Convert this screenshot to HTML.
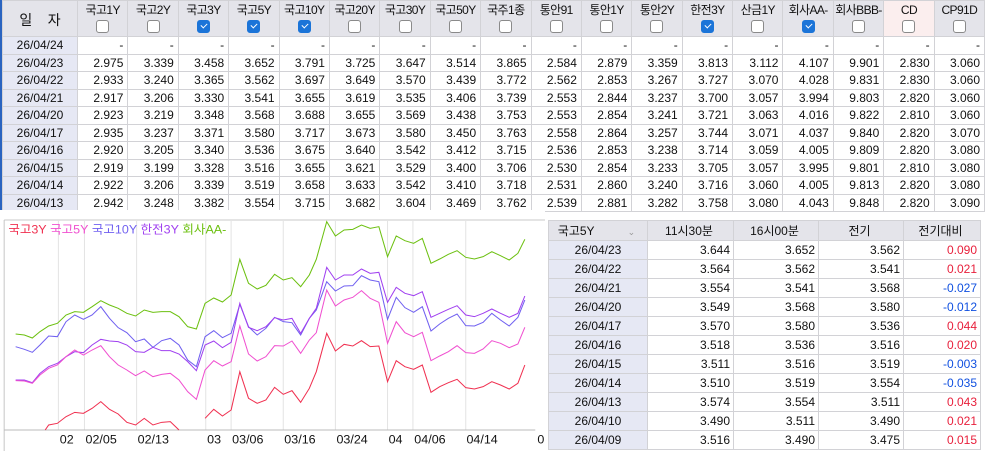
<!DOCTYPE html>
<html><head><meta charset="utf-8"><style>
*{margin:0;padding:0;box-sizing:border-box}
body{width:985px;height:451px;overflow:hidden;background:#fff;font-family:"Liberation Sans","Noto Sans CJK KR",sans-serif;font-size:12px;color:#111;position:relative}
#lb{position:absolute;left:0;top:0;width:2px;height:451px;background:#2a64c0}
table{border-collapse:collapse;table-layout:fixed;position:absolute}
#t1{left:2px;top:0;width:983px}
#t1 td,#t1 th{border:1px solid #d2d2d6;height:17.5px;padding:0 4px 0 0;text-align:right;white-space:nowrap;overflow:hidden;font-weight:normal}
#t1 th{background:#e4e4ea;height:36px;text-align:center;vertical-align:top;padding:2px 0 0;line-height:14px;letter-spacing:-0.6px}
#t1 td.d{background:#e6e8f4;text-align:center;padding:0}
#t1 th.cd{background:#fbeeee}
.cb{display:inline-block;width:13px;height:13px;border:1px solid #8a8a8a;border-radius:3px;background:#fff;margin-top:3px;position:relative}
.cb.on{background:#1b74d8;border-color:#1b74d8}
.cb.on:after{content:"";position:absolute;left:3px;top:2px;width:5px;height:3px;border-left:1.5px solid #fff;border-bottom:1.5px solid #fff;transform:rotate(-45deg)}
#t2{left:548px;top:220px;width:432px}
#t2 td,#t2 th{border:1px solid #d2d2d6;height:19px;text-align:right;padding:0 3px 0 0;font-weight:normal}
#t2 th{background:#e4e4ea;text-align:center;height:20px}
#t2 td.d{background:#e6e8f4;text-align:center;padding:0}
.r{color:#e8203c}.b{color:#1050e0}
#ch{position:absolute;left:0;top:210px}
</style></head><body>
<div id="lb"></div>
<table id="t1">
<colgroup><col style="width:75px"><col span="18" style="width:50.4px"></colgroup>
<tr><th style="vertical-align:middle;font-size:14px;letter-spacing:0">일&nbsp;&nbsp;&nbsp;&nbsp;자</th>
<th>국고1Y<br><span class="cb"></span></th><th>국고2Y<br><span class="cb"></span></th><th>국고3Y<br><span class="cb on"></span></th><th>국고5Y<br><span class="cb on"></span></th><th>국고10Y<br><span class="cb on"></span></th><th>국고20Y<br><span class="cb"></span></th><th>국고30Y<br><span class="cb"></span></th><th>국고50Y<br><span class="cb"></span></th><th>국주1종<br><span class="cb"></span></th><th>통안91<br><span class="cb"></span></th><th>통안1Y<br><span class="cb"></span></th><th>통안2Y<br><span class="cb"></span></th><th>한전3Y<br><span class="cb on"></span></th><th>산금1Y<br><span class="cb"></span></th><th>회사AA-<br><span class="cb on"></span></th><th>회사BBB-<br><span class="cb"></span></th><th class="cd">CD<br><span class="cb"></span></th><th>CP91D<br><span class="cb"></span></th></tr>
<tr><td class="d">26/04/24</td><td>-</td><td>-</td><td>-</td><td>-</td><td>-</td><td>-</td><td>-</td><td>-</td><td>-</td><td>-</td><td>-</td><td>-</td><td>-</td><td>-</td><td>-</td><td>-</td><td>-</td><td>-</td></tr>
<tr><td class="d">26/04/23</td><td>2.975</td><td>3.339</td><td>3.458</td><td>3.652</td><td>3.791</td><td>3.725</td><td>3.647</td><td>3.514</td><td>3.865</td><td>2.584</td><td>2.879</td><td>3.359</td><td>3.813</td><td>3.112</td><td>4.107</td><td>9.901</td><td>2.830</td><td>3.060</td></tr>
<tr><td class="d">26/04/22</td><td>2.933</td><td>3.240</td><td>3.365</td><td>3.562</td><td>3.697</td><td>3.649</td><td>3.570</td><td>3.439</td><td>3.772</td><td>2.562</td><td>2.853</td><td>3.267</td><td>3.727</td><td>3.070</td><td>4.028</td><td>9.831</td><td>2.830</td><td>3.060</td></tr>
<tr><td class="d">26/04/21</td><td>2.917</td><td>3.206</td><td>3.330</td><td>3.541</td><td>3.655</td><td>3.619</td><td>3.535</td><td>3.406</td><td>3.739</td><td>2.553</td><td>2.844</td><td>3.237</td><td>3.700</td><td>3.057</td><td>3.994</td><td>9.803</td><td>2.820</td><td>3.060</td></tr>
<tr><td class="d">26/04/20</td><td>2.923</td><td>3.219</td><td>3.348</td><td>3.568</td><td>3.688</td><td>3.655</td><td>3.569</td><td>3.438</td><td>3.753</td><td>2.553</td><td>2.854</td><td>3.241</td><td>3.721</td><td>3.063</td><td>4.016</td><td>9.822</td><td>2.810</td><td>3.060</td></tr>
<tr><td class="d">26/04/17</td><td>2.935</td><td>3.237</td><td>3.371</td><td>3.580</td><td>3.717</td><td>3.673</td><td>3.580</td><td>3.450</td><td>3.763</td><td>2.558</td><td>2.864</td><td>3.257</td><td>3.744</td><td>3.071</td><td>4.037</td><td>9.840</td><td>2.820</td><td>3.070</td></tr>
<tr><td class="d">26/04/16</td><td>2.920</td><td>3.205</td><td>3.340</td><td>3.536</td><td>3.675</td><td>3.640</td><td>3.542</td><td>3.412</td><td>3.715</td><td>2.536</td><td>2.853</td><td>3.238</td><td>3.714</td><td>3.059</td><td>4.005</td><td>9.809</td><td>2.820</td><td>3.080</td></tr>
<tr><td class="d">26/04/15</td><td>2.919</td><td>3.199</td><td>3.328</td><td>3.516</td><td>3.655</td><td>3.621</td><td>3.529</td><td>3.400</td><td>3.706</td><td>2.530</td><td>2.854</td><td>3.233</td><td>3.705</td><td>3.057</td><td>3.995</td><td>9.801</td><td>2.810</td><td>3.080</td></tr>
<tr><td class="d">26/04/14</td><td>2.922</td><td>3.206</td><td>3.339</td><td>3.519</td><td>3.658</td><td>3.633</td><td>3.542</td><td>3.410</td><td>3.718</td><td>2.531</td><td>2.860</td><td>3.240</td><td>3.716</td><td>3.060</td><td>4.005</td><td>9.813</td><td>2.820</td><td>3.080</td></tr>
<tr><td class="d">26/04/13</td><td>2.942</td><td>3.248</td><td>3.382</td><td>3.554</td><td>3.715</td><td>3.682</td><td>3.604</td><td>3.469</td><td>3.762</td><td>2.539</td><td>2.881</td><td>3.282</td><td>3.758</td><td>3.080</td><td>4.043</td><td>9.848</td><td>2.820</td><td>3.090</td></tr>
</table>

<svg id="ch" width="545" height="241" viewBox="0 0 1568 723" preserveAspectRatio="none">
<rect x="0" y="0" width="1635" height="723" fill="#fff"/>
<line x1="12" y1="30" x2="1635" y2="30" stroke="#c8c8c8" stroke-width="3"/>
<line x1="12" y1="30" x2="12" y2="723" stroke="#c8c8c8" stroke-width="3"/>
<g stroke="#e4e4e4" stroke-width="3"><line x1="168" y1="30" x2="168" y2="660"/><line x1="243" y1="30" x2="243" y2="660"/><line x1="393" y1="30" x2="393" y2="660"/><line x1="592" y1="30" x2="592" y2="660"/><line x1="665" y1="30" x2="665" y2="660"/><line x1="815" y1="30" x2="815" y2="660"/><line x1="965" y1="30" x2="965" y2="660"/><line x1="1115" y1="30" x2="1115" y2="660"/><line x1="1188" y1="30" x2="1188" y2="660"/><line x1="1340" y1="30" x2="1340" y2="660"/></g>
<line x1="12" y1="660" x2="1540" y2="660" stroke="#bbb" stroke-width="3"/>
<g fill="none" stroke-width="3">
<polyline stroke="#6cc010" points="45,372 70,375 93,384 115,365 140,348 165,340 190,315 215,305 240,307 265,290 290,272 315,285 340,295 365,310 390,318 415,300 440,307 465,305 490,305 515,320 540,350 565,357 590,280 615,264 640,276 665,255 690,148 715,220 740,237 765,226 790,193 815,210 840,203 865,230 890,195 910,148 940,35 965,78 990,60 1015,58 1040,45 1065,55 1090,50 1115,140 1140,78 1165,92 1190,100 1215,85 1240,160 1265,147 1290,133 1315,122 1340,142 1365,147 1390,140 1415,125 1440,137 1465,150 1490,130 1510,88"/>
<polyline stroke="#7060f0" points="45,410 70,418 93,427 115,405 140,378 165,380 190,335 215,315 240,328 265,315 290,290 315,325 340,353 365,368 390,395 415,387 440,412 465,392 490,385 515,405 540,450 565,470 590,380 615,362 640,383 665,370 690,283 715,350 740,375 765,355 790,322 815,335 840,338 865,375 890,325 910,300 940,215 965,243 990,228 1015,227 1040,197 1065,210 1090,215 1115,328 1140,262 1165,293 1190,307 1215,290 1240,363 1265,342 1290,325 1315,312 1340,347 1365,348 1390,337 1415,310 1440,330 1465,348 1490,322 1510,270"/>
<polyline stroke="#a040f0" points="45,510 70,510 93,518 115,490 140,470 165,460 190,440 215,425 240,428 265,405 290,388 315,393 340,395 365,405 390,425 415,427 440,412 465,422 490,422 515,432 540,455 565,482 590,405 615,393 640,413 665,397 690,280 715,352 740,362 765,350 790,323 815,330 840,325 865,370 890,325 910,295 940,172 965,210 990,195 1015,195 1040,177 1065,190 1090,187 1115,277 1140,232 1165,250 1190,257 1215,245 1240,322 1265,310 1290,298 1315,287 1340,315 1365,320 1390,310 1415,297 1440,310 1465,322 1490,310 1510,258"/>
<polyline stroke="#f050d0" points="45,512 70,513 93,520 115,495 140,475 165,465 190,440 215,420 240,435 265,420 290,407 315,440 340,465 365,480 390,497 415,483 440,500 465,493 490,490 515,510 540,545 565,568 590,480 615,452 640,468 665,455 690,348 715,432 740,453 765,440 790,407 815,408 840,393 865,430 890,390 910,368 940,240 965,288 990,270 1015,262 1040,242 1065,265 1090,277 1115,400 1140,335 1165,368 1190,380 1215,367 1240,452 1265,438 1290,425 1315,407 1340,428 1365,430 1390,417 1415,392 1440,400 1465,413 1490,402 1510,352"/>
<polyline stroke="#f03050" points="130,660 140,645 165,640 190,620 215,607 240,610 265,595 290,575 315,598 340,612 365,637 390,645 415,625 440,645 465,637 490,635 515,660"/>
<polyline stroke="#f03050" points="590,625 615,598 640,618 665,600 690,485 715,565 740,580 765,570 790,532 815,553 840,542 865,577 890,535 910,485 940,370 965,423 990,403 1015,408 1040,392 1065,410 1090,408 1115,515 1140,452 1165,470 1190,478 1215,465 1240,547 1265,530 1290,518 1315,508 1340,533 1365,537 1390,530 1415,515 1440,525 1465,537 1490,520 1510,465"/>
</g>
<g font-family="Liberation Sans, Noto Sans CJK KR, sans-serif" font-size="36" fill="#111">
<text x="172" y="700">02</text><text x="246" y="700">02/05</text><text x="396" y="700">02/13</text><text x="596" y="700">03</text><text x="668" y="700">03/06</text><text x="818" y="700">03/16</text><text x="968" y="700">03/24</text><text x="1118" y="700">04</text><text x="1192" y="700">04/06</text><text x="1342" y="700">04/14</text><text x="1546" y="700">0</text>
</g>
<text x="24" y="70" font-family="Liberation Sans, Noto Sans CJK KR, sans-serif" font-size="36"><tspan fill="#f03050">국고3Y</tspan> <tspan fill="#f050d0">국고5Y</tspan> <tspan fill="#7060f0">국고10Y</tspan> <tspan fill="#a040f0">한전3Y</tspan> <tspan fill="#6cc010">회사AA-</tspan></text>
</svg>

<table id="t2">
<colgroup><col style="width:99px"><col style="width:86px"><col style="width:85px"><col style="width:85px"><col style="width:77px"></colgroup>
<tr><th>국고5Y <span style="color:#999;font-size:9px;margin-left:30px">⌄</span></th><th>11시30분</th><th>16시00분</th><th>전기</th><th>전기대비</th></tr>
<tr><td class="d">26/04/23</td><td>3.644</td><td>3.652</td><td>3.562</td><td class="r">0.090</td></tr>
<tr><td class="d">26/04/22</td><td>3.564</td><td>3.562</td><td>3.541</td><td class="r">0.021</td></tr>
<tr><td class="d">26/04/21</td><td>3.554</td><td>3.541</td><td>3.568</td><td class="b">-0.027</td></tr>
<tr><td class="d">26/04/20</td><td>3.549</td><td>3.568</td><td>3.580</td><td class="b">-0.012</td></tr>
<tr><td class="d">26/04/17</td><td>3.570</td><td>3.580</td><td>3.536</td><td class="r">0.044</td></tr>
<tr><td class="d">26/04/16</td><td>3.518</td><td>3.536</td><td>3.516</td><td class="r">0.020</td></tr>
<tr><td class="d">26/04/15</td><td>3.511</td><td>3.516</td><td>3.519</td><td class="b">-0.003</td></tr>
<tr><td class="d">26/04/14</td><td>3.510</td><td>3.519</td><td>3.554</td><td class="b">-0.035</td></tr>
<tr><td class="d">26/04/13</td><td>3.574</td><td>3.554</td><td>3.511</td><td class="r">0.043</td></tr>
<tr><td class="d">26/04/10</td><td>3.490</td><td>3.511</td><td>3.490</td><td class="r">0.021</td></tr>
<tr><td class="d">26/04/09</td><td>3.516</td><td>3.490</td><td>3.475</td><td class="r">0.015</td></tr>
</table>
</body></html>
